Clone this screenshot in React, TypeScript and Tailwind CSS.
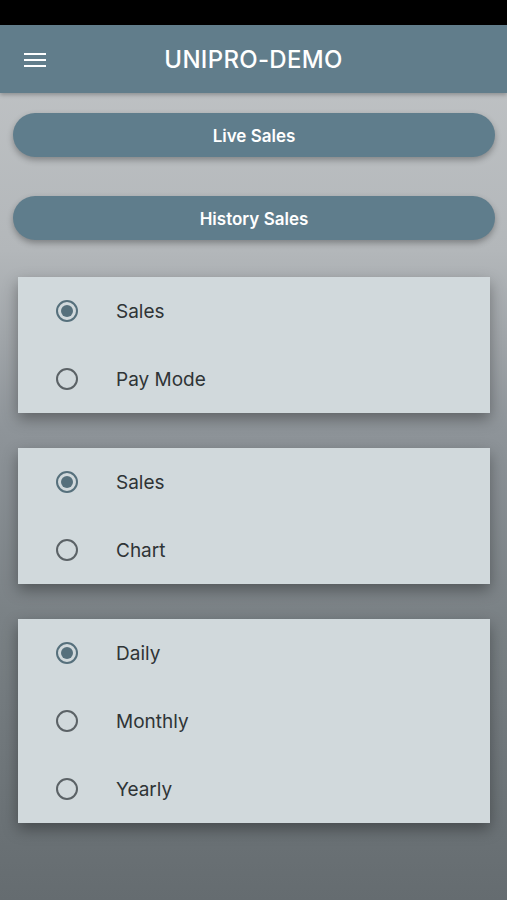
import React, { useState } from "react";

function Radio({ checked }: { checked: boolean }) {
  return (
    <span
      className={
        "flex h-[22px] w-[22px] shrink-0 items-center justify-center rounded-full border-2 " +
        (checked ? "border-[#56707c]" : "border-[#5b6266]")
      }
    >
      {checked && <span className="h-[12px] w-[12px] rounded-full bg-[#56707c]" />}
    </span>
  );
}

function Group({ options, initial }: { options: string[]; initial: number }) {
  const [sel, setSel] = useState(initial);
  return (
    <div className="ml-[18px] mr-[17px] bg-[#d1d9dc] shadow-[0_6px_14px_rgba(0,0,0,0.35)]">
      {options.map((o, i) => (
        <button
          key={o}
          onClick={() => setSel(i)}
          className="flex h-[68px] w-full items-center pl-[38px] text-left"
        >
          <Radio checked={sel === i} />
          <span className="ml-[38px] translate-y-[1px] text-[19px] text-[#2f3436]">{o}</span>
        </button>
      ))}
    </div>
  );
}

export default function App() {
  return (
    <div
      className="flex min-h-[900px] w-[507px] flex-col bg-[linear-gradient(to_bottom,#c3c6c8_0px,#b3b7ba_250px,#8e9499_430px,#7a8185_620px,#656c70_900px)]"
      style={{ fontFamily: "Inter, 'Open Sans', sans-serif" }}
    >
      <div className="h-[25px] bg-black" />
      <header className="relative flex h-[68px] items-center justify-center bg-[#617d8b] shadow-[0_2px_4px_rgba(0,0,0,0.25)]">
        <div className="absolute left-[24px] top-[28px] flex w-[22px] flex-col gap-[4px]">
          <span className="h-[2px] w-full bg-white" />
          <span className="h-[2px] w-full bg-white" />
          <span className="h-[2px] w-full bg-white" />
        </div>
        <h1 className="translate-y-[1px] text-[24px] font-medium tracking-[0.3px] text-white">UNIPRO-DEMO</h1>
      </header>

      <div className="flex flex-col gap-[39px] pl-[13px] pr-[12px] pt-[20px]">
        <button className="h-[44px] w-full rounded-full bg-[#5f7d8c] text-[17px] font-semibold text-white shadow-[0_3px_6px_rgba(0,0,0,0.3)]">
          <span className="inline-block translate-y-[2px]">Live Sales</span>
        </button>
        <button className="h-[44px] w-full rounded-full bg-[#5f7d8c] text-[17px] font-semibold text-white shadow-[0_3px_6px_rgba(0,0,0,0.3)]">
          <span className="inline-block translate-y-[2px]">History Sales</span>
        </button>
      </div>

      <div className="mt-[37px] flex flex-col gap-[35px]">
        <Group options={["Sales", "Pay Mode"]} initial={0} />
        <Group options={["Sales", "Chart"]} initial={0} />
        <Group options={["Daily", "Monthly", "Yearly"]} initial={0} />
      </div>
    </div>
  );
}
